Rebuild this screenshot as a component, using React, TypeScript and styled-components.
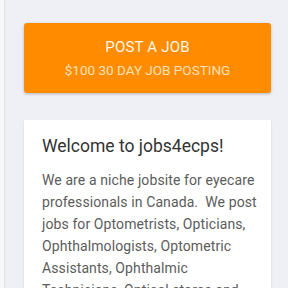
import styled, { createGlobalStyle } from 'styled-components';

const GlobalStyle = createGlobalStyle`
  html, body {
    margin: 0;
    padding: 0;
    background: #eff0f5;
    font-family: Roboto, 'Noto Sans', sans-serif;
  }
`;

const Page = styled.div`
  display: flex;
  height: 288px;
  overflow: hidden;
`;

const SideEdge = styled.div`
  width: 4px;
  flex-shrink: 0;
  background: #f6f7f9;
  border-right: 1px solid #e3e4e8;
`;

const Main = styled.div`
  flex: 1;
  padding: 23px 17px 0 19px;
  display: flex;
  flex-direction: column;
  gap: 27px;
`;

const PostButton = styled.button`
  height: 70px;
  flex-shrink: 0;
  border: none;
  border-radius: 3px;
  background: #ff8c00;
  box-shadow: 0 1px 3px rgba(0, 0, 0, 0.25);
  display: flex;
  flex-direction: column;
  align-items: center;
  justify-content: center;
  gap: 6px;
  font-family: Roboto, sans-serif;
  cursor: pointer;
`;

const ButtonTitle = styled.span`
  font-size: 15px;
  color: #fff6ea;
  letter-spacing: 0.2px;
`;

const ButtonSub = styled.span`
  font-size: 13.5px;
  color: #ffe0b8;
`;

const Card = styled.div`
  background: #fff;
  box-shadow: 0 1px 2px rgba(0, 0, 0, 0.12);
  padding: 16px 12px 14px 18px;
  flex: 1;
`;

const CardTitle = styled.h2`
  margin: 0 0 13px;
  font-size: 17.5px;
  font-weight: 400;
  color: #333;
`;

const CardText = styled.p`
  margin: 0;
  font-size: 14px;
  line-height: 22px;
  color: #5c5c5c;
  letter-spacing: 0.1px;
`;

export default function App() {
  return (
    <Page>
      <GlobalStyle />
      <SideEdge />
      <Main>
        <PostButton>
          <ButtonTitle>POST A JOB</ButtonTitle>
          <ButtonSub>$100 30 DAY JOB POSTING</ButtonSub>
        </PostButton>
        <Card>
          <CardTitle>Welcome to jobs4ecps!</CardTitle>
          <CardText>
            We are a niche jobsite for eyecare professionals in Canada.&nbsp; We post
            jobs for Optometrists, Opticians, Ophthalmologists, Optometric
            Assistants, Ophthalmic Technicians, Optical stores and
          </CardText>
        </Card>
      </Main>
    </Page>
  );
}
